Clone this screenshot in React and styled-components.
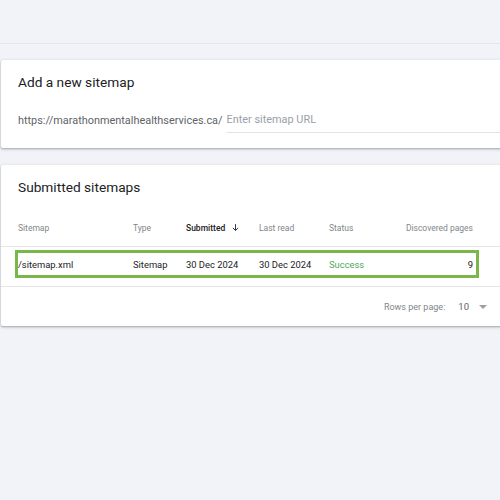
import React from 'react';
import styled, { createGlobalStyle } from 'styled-components';

const GlobalStyle = createGlobalStyle`
  body {
    margin: 0;
    background: #f1f3f8;
    font-family: Roboto, "Liberation Sans", Arial, sans-serif;
  }
`;

const Page = styled.div`
  width: 500px;
  height: 500px;
  overflow: hidden;
  background: #f1f3f8;
`;

const TopBar = styled.div`
  height: 43px;
  border-bottom: 1px solid #e3e6ec;
`;

const Cards = styled.div`
  display: flex;
  flex-direction: column;
  gap: 17px;
  padding: 16px 0 0 1px;
`;

const Card = styled.div`
  background: #fff;
  width: 520px;
  height: ${(p) => (p.$height ? `${p.$height}px` : 'auto')};
  box-shadow: 0 1px 2px rgba(60, 64, 67, 0.35), 0 1px 3px 1px rgba(60, 64, 67, 0.1);
  border-radius: 2px;
`;

const Title = styled.h2`
  margin: 0;
  font-size: 13.7px;
  line-height: 16px;
  font-weight: 400;
  color: #202124;
  padding: ${(p) => p.$pad};
`;

const AddRow = styled.div`
  display: flex;
  align-items: flex-end;
  height: 58px;
  box-sizing: border-box;
  padding: 0 0 15px 17px;
`;

const Prefix = styled.span`
  font-size: 10.9px;
  color: #5f6368;
  margin-right: 4px;
  line-height: 16px;
  padding-bottom: 4px;
`;

const UrlInput = styled.input`
  flex: 1;
  border: none;
  border-bottom: 1px solid #e3e3e3;
  outline: none;
  font-family: inherit;
  font-size: 10.9px;
  color: #202124;
  padding: 0 0 4px 0;
  line-height: 16px;
  background: transparent;
  &::placeholder {
    color: #9aa0a6;
  }
`;

const Table = styled.div`
  display: flex;
  flex-direction: column;
`;

const cols = '115px 53px 73px 70px 70px 1fr';

const HeadRow = styled.div`
  display: grid;
  grid-template-columns: 115px 53px 73px 70px 70px 74px;
  align-items: center;
  box-sizing: border-box;
  height: 38px;
  padding-left: 17px;
  border-bottom: 1px solid #e6e6e6;
`;

const HeadCell = styled.div`
  font-size: 8.5px;
  color: ${(p) => (p.$active ? '#202124' : '#80868b')};
  font-weight: ${(p) => (p.$active ? 500 : 400)};
  white-space: nowrap;
  display: flex;
  align-items: center;
  justify-content: ${(p) => (p.$right ? 'flex-end' : 'flex-start')};
  gap: 6px;
`;

const BodyWrap = styled.div`
  padding: 3px 0 8px 0;
  border-bottom: 1px solid #e6e6e6;
`;

const DataRow = styled.div`
  display: grid;
  grid-template-columns: ${cols};
  align-items: center;
  width: 464px;
  box-sizing: border-box;
  height: 28px;
  margin-left: 14px;
  padding: 0 3px 0 0;
  border: 3px solid #7cb64b;
`;

const Cell = styled.div`
  font-size: 9.4px;
  color: ${(p) => (p.$ok ? '#4fa85e' : '#202124')};
  text-align: ${(p) => (p.$right ? 'right' : 'left')};
  white-space: nowrap;
`;

const Footer = styled.div`
  display: flex;
  justify-content: flex-end;
  align-items: center;
  height: 39px;
  padding-right: 34px;
  font-size: 9px;
  color: #80868b;
`;

const RowsValue = styled.span`
  color: #5f6368;
  font-size: 9.5px;
  margin-left: 13px;
  margin-right: 10px;
`;

const Caret = styled.span`
  width: 0;
  height: 0;
  border-left: 4px solid transparent;
  border-right: 4px solid transparent;
  border-top: 4px solid #9aa0a6;
`;

const ArrowDown = () => (
  <svg width="9" height="9" viewBox="0 0 24 24" fill="none" stroke="#202124" strokeWidth="2.4">
    <path d="M12 3v17M5 13l7 7 7-7" />
  </svg>
);

export default function App() {
  return (
    <Page>
      <GlobalStyle />
      <TopBar />
      <Cards>
        <Card $height={88}>
          <Title $pad="14px 17px 0">Add a new sitemap</Title>
          <AddRow>
            <Prefix>https://marathonmentalhealthservices.ca/</Prefix>
            <UrlInput placeholder="Enter sitemap URL" />
          </AddRow>
        </Card>
        <Card>
          <Title $pad="14px 17px 14px">Submitted sitemaps</Title>
          <Table>
            <HeadRow>
              <HeadCell>Sitemap</HeadCell>
              <HeadCell>Type</HeadCell>
              <HeadCell $active>Submitted <ArrowDown /></HeadCell>
              <HeadCell>Last read</HeadCell>
              <HeadCell>Status</HeadCell>
              <HeadCell $right>Discovered pages</HeadCell>
            </HeadRow>
            <BodyWrap>
              <DataRow>
                <Cell>/sitemap.xml</Cell>
                <Cell>Sitemap</Cell>
                <Cell>30 Dec 2024</Cell>
                <Cell>30 Dec 2024</Cell>
                <Cell $ok>Success</Cell>
                <Cell $right>9</Cell>
              </DataRow>
            </BodyWrap>
            <Footer>
              Rows per page:
              <RowsValue>10</RowsValue>
              <Caret />
            </Footer>
          </Table>
        </Card>
      </Cards>
    </Page>
  );
}
